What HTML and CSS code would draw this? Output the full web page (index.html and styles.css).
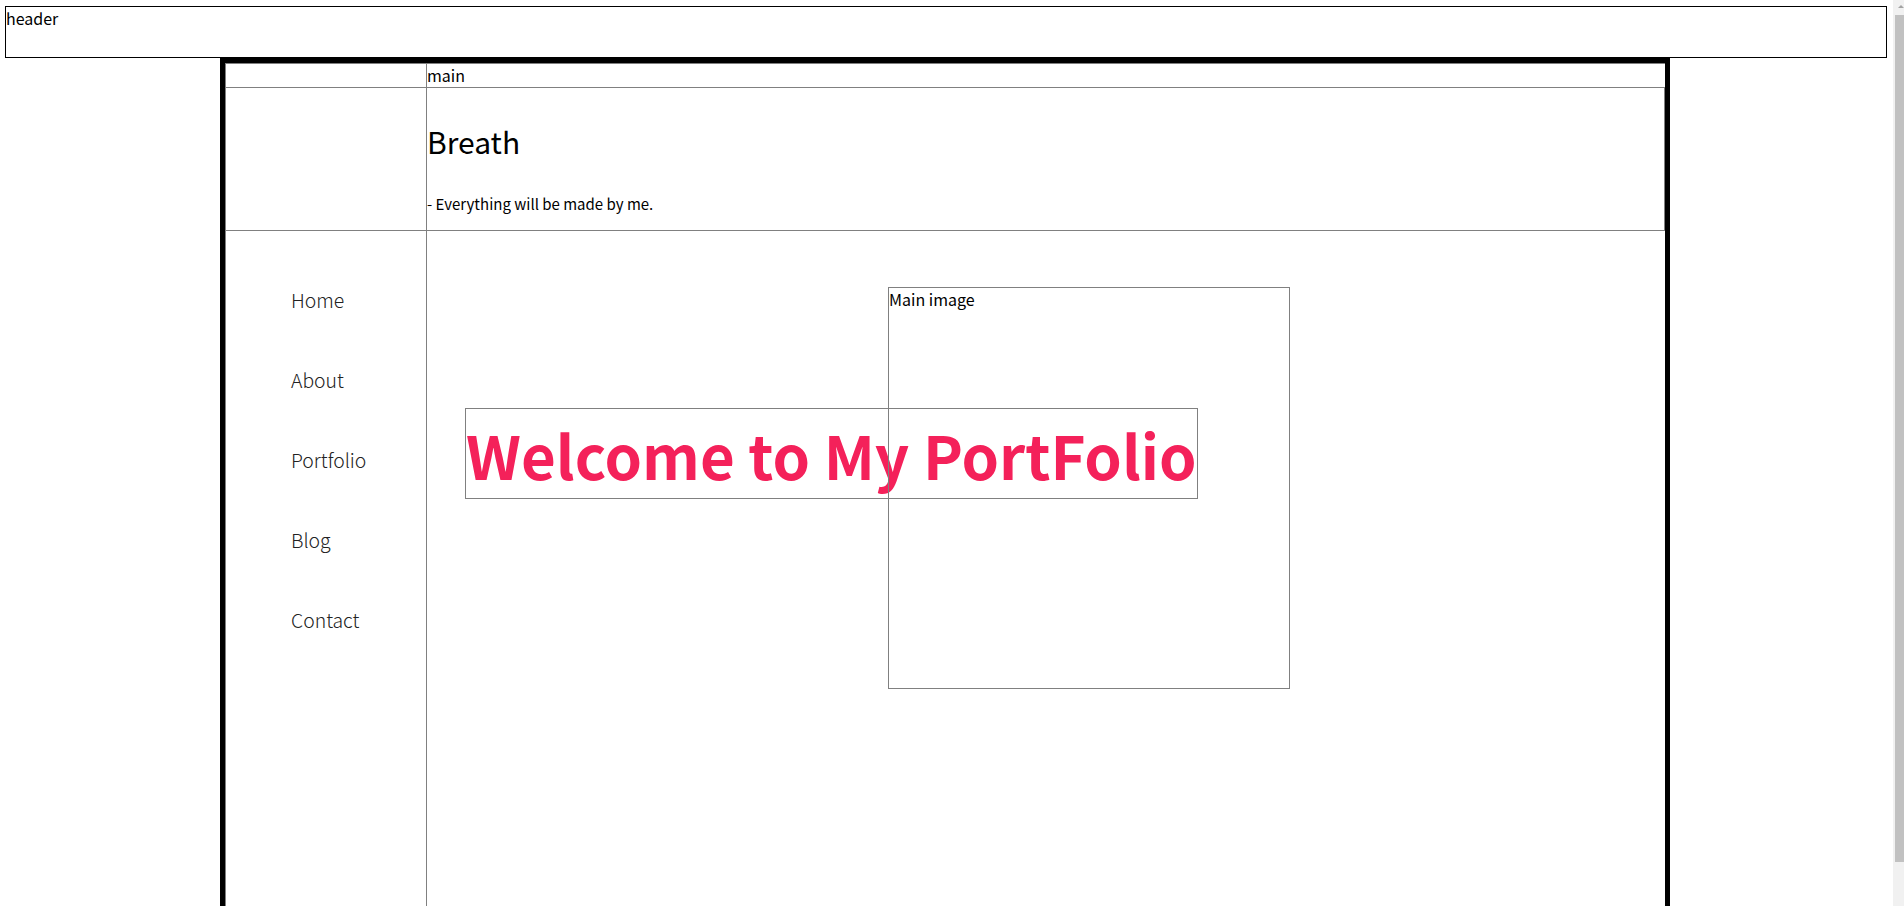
FILE: index.html
```html
<!DOCTYPE html>
<html lang="en">
<head>
<meta charset="utf-8">
<title>Breath</title>
<link rel="stylesheet" href="styles.css">
</head>
<body>
<header class="site-header">header</header>
<div class="frame">
  <div class="layout">
    <div class="cell cell-left row-top"></div>
    <div class="cell cell-right row-top main-label">main</div>
    <div class="cell cell-left row-intro"></div>
    <section class="cell cell-right row-intro intro">
      <h1 class="intro-title">Breath</h1>
      <p class="intro-sub">- Everything will be made by me.</p>
    </section>
    <nav class="cell cell-left row-body side">
      <ul class="side-menu">
        <li class="side-item">Home</li>
        <li class="side-item">About</li>
        <li class="side-item">Portfolio</li>
        <li class="side-item">Blog</li>
        <li class="side-item">Contact</li>
      </ul>
    </nav>
    <main class="cell cell-right row-body stage">
      <h2 class="welcome">Welcome to My PortFolio</h2>
      <div class="main-image">Main image</div>
    </main>
  </div>
</div>
<div class="fake-scrollbar" aria-hidden="true">
  <span class="fake-scrollbar-up"></span>
  <span class="fake-scrollbar-thumb"></span>
</div>
</body>
</html>
```

FILE: styles.css
```css
html, body {
  margin: 0;
  padding: 0;
  background: #fff;
}

body {
  font-family: "Noto Sans CJK KR", "Noto Sans", sans-serif;
  font-size: 16px;
  color: #000;
}

.site-header {
  display: block;
  box-sizing: border-box;
  width: 1882px;
  height: 52px;
  margin: 6px 0 0 5px;
  border: 1px solid #000;
  line-height: 23px;
}

.frame {
  width: 1440px;
  margin: 0 0 0 220px;
  border: 5px solid #000;
}

.layout {
  display: grid;
  grid-template-columns: 201px 1238px;
  border-top: 1px solid #808080;
  border-left: 1px solid #808080;
}

.cell {
  box-sizing: border-box;
  margin: 0;
}

.cell-left {
  border-right: 1px solid #808080;
}

.row-top {
  height: 24px;
  border-bottom: 1px solid #808080;
}

.main-label {
  line-height: 23px;
}

.row-intro {
  height: 143px;
  border-bottom: 1px solid #808080;
}

.intro {
  border-right: 1px solid #808080;
}

.intro-title {
  margin: 30px 0 28px;
  font-size: 30px;
  font-weight: 400;
  line-height: 46px;
}

.intro-sub {
  margin: 0 0 15px;
  font-size: 15px;
  line-height: 23px;
}

.row-body {
  height: 700px;
}

.side-menu {
  list-style: none;
  margin: 0;
  padding: 54px 0 0 65px;
  display: flex;
  flex-direction: column;
  gap: 51px;
}

.side-item {
  font-size: 19.4px;
  font-weight: 300;
  line-height: 29px;
  color: #222;
}

.stage {
  position: relative;
}

.main-image {
  position: relative;
  width: 400px;
  height: 400px;
  margin: 56px 0 0 461px;
  border: 1px solid #808080;
  line-height: 23px;
}

.welcome {
  position: absolute;
  left: 38px;
  top: 177px;
  margin: 0;
  border: 1px solid #808080;
  font-size: 60px;
  font-weight: 700;
  line-height: 89px;
  color: #f4215a;
  white-space: nowrap;
}

.fake-scrollbar {
  position: fixed;
  top: 0;
  right: 0;
  width: 11px;
  height: 100vh;
  background: #f1f1f1;
}

.fake-scrollbar-up {
  position: absolute;
  top: 5px;
  left: 5px;
  width: 0;
  height: 0;
  border-left: 3px solid transparent;
  border-right: 3px solid transparent;
  border-bottom: 3px solid #a3a3a3;
}

.fake-scrollbar-thumb {
  position: absolute;
  top: 15px;
  left: 2px;
  right: 0;
  height: 847px;
  background: #c1c1c1;
}
```
